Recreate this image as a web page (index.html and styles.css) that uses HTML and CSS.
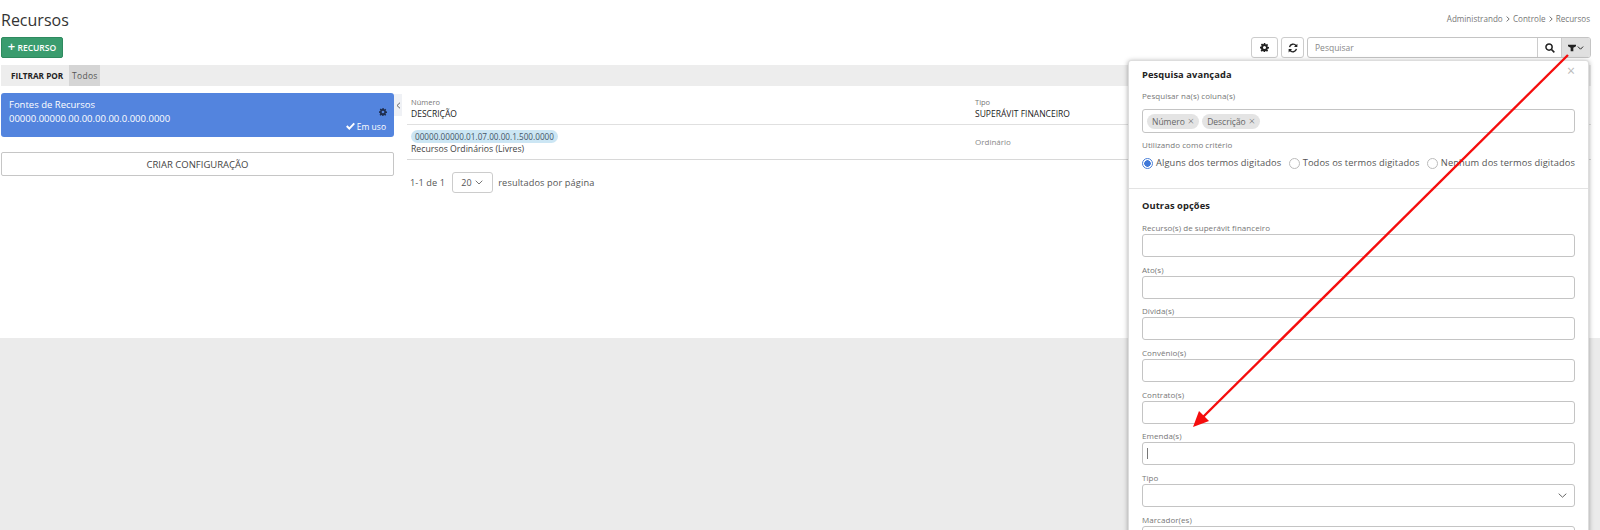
FILE: index.html
```html
<!DOCTYPE html>
<html lang="pt-BR">
<head>
<meta charset="utf-8">
<title>Recursos</title>
<link rel="stylesheet" href="styles.css">
</head>
<body>
<div class="page">
  <header class="top">
    <h1 class="title">Recursos</h1>
    <nav class="crumbs">Administrando <span class="sep"><svg width="4" height="6" viewBox="0 0 4 6" fill="none" stroke="#777" stroke-width="1"><path d="M.6.6 3.2 3 .6 5.4"/></svg></span> Controle <span class="sep"><svg width="4" height="6" viewBox="0 0 4 6" fill="none" stroke="#777" stroke-width="1"><path d="M.6.6 3.2 3 .6 5.4"/></svg></span> Recursos</nav>
  </header>
  <div class="toolbar">
    <button class="btn-add"><span class="plus">+</span> RECURSO</button>
    <div class="tools">
      <button class="tool tool-gear">
        <svg width="9" height="9" viewBox="0 0 16 16"><path fill="#222" fill-rule="evenodd" d="M6.7 0h2.6l.4 2.2 1.4.6L12.5 1.5l1.9 1.9-1.3 1.9.6 1.4 2.3.4v2.7l-2.3.4-.6 1.4 1.3 1.9-1.9 1.9-1.9-1.3-1.4.6-.4 2.3H6.7l-.4-2.3-1.4-.6-1.9 1.3-1.9-1.9 1.3-1.9-.6-1.4L0 9.3V6.7l2.3-.4.6-1.4-1.3-1.9 1.9-1.9 1.9 1.3 1.4-.6zM8 5.3a2.7 2.7 0 1 0 0 5.4 2.7 2.7 0 0 0 0-5.4z"/></svg>
      </button>
      <button class="tool tool-sync">
        <svg width="10" height="10" viewBox="0 0 16 16" fill="none" stroke="#222" stroke-width="2.2"><path d="M2.5 6.5A5.8 5.8 0 0 1 13 4.5"/><path d="M13.5 9.5A5.8 5.8 0 0 1 3 11.5"/><path fill="#222" stroke="none" d="M15 1v5.5H9.5zM1 15V9.5h5.5z"/></svg>
      </button>
      <div class="search">
        <span class="search-input">Pesquisar</span>
        <span class="search-btn">
          <svg width="10" height="10" viewBox="0 0 16 16" fill="none" stroke="#222" stroke-width="2.4"><circle cx="6.5" cy="6.5" r="5"/><path d="M10.2 10.2 15 15"/></svg>
        </span>
        <span class="filter-btn">
          <svg width="8" height="8" viewBox="0 0 12 12"><path fill="#222" d="M0 1h12v2.4L8 5.6V11H4V5.6L0 3.4z"/></svg>
          <svg width="7" height="4" viewBox="0 0 8 5" fill="none" stroke="#222" stroke-width="1.2"><path d="M.7.7 4 4l3.3-3.3"/></svg>
        </span>
      </div>
    </div>
  </div>
  <div class="filterbar"><b class="filter-title">FILTRAR POR</b><span class="filter-tag">Todos</span></div>
  <div class="content">
    <aside class="side">
      <div class="card">
        <div class="card-text">
          <div>Fontes de Recursos</div>
          <div>00000.00000.00.00.00.00.0.000.0000</div>
        </div>
        <div class="card-meta">
          <svg class="card-gear" width="8" height="8" viewBox="0 0 16 16"><path fill="#1f2d4d" fill-rule="evenodd" d="M6.7 0h2.6l.4 2.2 1.4.6L12.5 1.5l1.9 1.9-1.3 1.9.6 1.4 2.3.4v2.7l-2.3.4-.6 1.4 1.3 1.9-1.9 1.9-1.9-1.3-1.4.6-.4 2.3H6.7l-.4-2.3-1.4-.6-1.9 1.3-1.9-1.9 1.3-1.9-.6-1.4L0 9.3V6.7l2.3-.4.6-1.4-1.3-1.9 1.9-1.9 1.9 1.3 1.4-.6zM8 5.3a2.7 2.7 0 1 0 0 5.4 2.7 2.7 0 0 0 0-5.4z"/></svg>
          <span class="in-use"><svg width="9" height="8" viewBox="0 0 12 10" fill="none" stroke="#fff" stroke-width="2.6"><path d="M1 5l3.4 3.4L11 1.4"/></svg> Em uso</span>
        </div>
      </div>
      <button class="btn-create">CRIAR CONFIGURAÇÃO</button>
    </aside>
    <div class="collapse"><svg width="5" height="7" viewBox="0 0 5 7" fill="none" stroke="#666" stroke-width="1"><path d="M4 .7 1 3.5 4 6.3"/></svg></div>
    <main class="main">
      <div class="row head">
        <div class="col-a"><small>Número</small><span>DESCRIÇÃO</span></div>
        <div class="col-b"><small>Tipo</small><span>SUPERÁVIT FINANCEIRO</span></div>
      </div>
      <div class="row body-row">
        <div class="col-a"><span class="pill">00000.00000.01.07.00.00.1.500.0000</span><span class="desc">Recursos Ordinários (Livres)</span></div>
        <div class="col-b type">Ordinário</div>
      </div>
      <div class="pager">
        <span>1-1 de 1</span>
        <span class="select">20 <svg width="8" height="5" viewBox="0 0 8 5" fill="none" stroke="#777" stroke-width="1"><path d="M.7.7 4 4l3.3-3.3"/></svg></span>
        <span>resultados por página</span>
      </div>
    </main>
  </div>
</div>

<section class="panel">
  <div class="panel-top">
    <span class="close">×</span>
    <h2 class="panel-title">Pesquisa avançada</h2>
    <label class="lbl lbl-first">Pesquisar na(s) coluna(s)</label>
    <div class="multi">
      <span class="chip">Número <i>×</i></span>
      <span class="chip">Descrição <i>×</i></span>
    </div>
    <label class="lbl lbl-crit">Utilizando como critério</label>
    <div class="radios">
      <span class="radio"><span class="dot on"></span>Alguns dos termos digitados</span>
      <span class="radio"><span class="dot"></span>Todos os termos digitados</span>
      <span class="radio"><span class="dot"></span>Nenhum dos termos digitados</span>
    </div>
  </div>
  <div class="panel-bottom">
    <h2 class="panel-title">Outras opções</h2>
    <div class="fields">
      <div class="field"><label class="lbl">Recurso(s) de superávit financeiro</label><div class="input"></div></div>
      <div class="field"><label class="lbl">Ato(s)</label><div class="input"></div></div>
      <div class="field"><label class="lbl">Dívida(s)</label><div class="input"></div></div>
      <div class="field"><label class="lbl">Convênio(s)</label><div class="input"></div></div>
      <div class="field"><label class="lbl">Contrato(s)</label><div class="input"></div></div>
      <div class="field"><label class="lbl">Emenda(s)</label><div class="input"><span class="caret"></span></div></div>
      <div class="field"><label class="lbl">Tipo</label><div class="input sel"><svg width="9" height="5" viewBox="0 0 9 5" fill="none" stroke="#666" stroke-width="1"><path d="M.7.7 4.5 4.2 8.3.7"/></svg></div></div>
      <div class="field"><label class="lbl">Marcador(es)</label><div class="input"></div></div>
    </div>
  </div>
</section>

<svg class="arrow" width="1600" height="530" viewBox="0 0 1600 530">
  <path d="M1568 55 1202 418" stroke="#f50d0d" stroke-width="2.4" fill="none"/>
  <path d="M1193 427 1199 411 1209 421z" fill="#f50d0d"/>
</svg>
</body>
</html>
```

FILE: styles.css
```css
* { box-sizing: border-box; }
html, body { margin: 0; padding: 0; height: 530px; overflow: hidden; }
body {
  background: #ebebeb;
  font-family: "Open Sans", "Liberation Sans", sans-serif;
  color: #333;
  position: relative;
}
button { font-family: inherit; cursor: pointer; }

.page { background: #fff; height: 338px; padding: 0 9px 0 1px; overflow: hidden; }

.top { display: flex; justify-content: space-between; height: 37px; }
.title { margin: 11px 0 0; font-size: 16px; line-height: 18px; font-weight: 400; color: #333; }
.crumbs { margin: 13px 1px 0 0; font-size: 8.1px; line-height: 12px; color: #777; }
.sep { display: inline-block; margin: 0 1px; }

.toolbar { display: flex; justify-content: space-between; align-items: flex-start; height: 28px; }
.btn-add {
  flex: none; width: 62px; height: 21px; padding: 0;
  background: #3a9c6e; border: 1px solid #2f8a5f; border-radius: 2px;
  color: #fff; font-size: 8.5px; font-weight: 600; line-height: 18px;
}
.plus { font-size: 13px; line-height: 10px; }
.tools { display: flex; gap: 3px; align-items: flex-start; }
.tool {
  height: 21px; padding: 0; background: #fff;
  border: 1px solid #ccc; border-radius: 3px;
  display: flex; align-items: center; justify-content: center;
}
.tool-gear { width: 27px; }
.tool-sync { width: 23px; }
.search {
  display: flex; width: 284px; height: 21px;
  border: 1px solid #c4c4c4; border-radius: 3px; overflow: hidden;
}
.search-input { flex: 1; font-size: 8.5px; line-height: 19px; padding-left: 7px; color: #888; }
.search-btn { flex: none; width: 24px; display: flex; align-items: center; justify-content: center; border-left: 1px solid #ccc; }
.filter-btn { flex: none; width: 29px; display: flex; align-items: center; justify-content: center; gap: 1px; background: #e0e0e0; border-left: 1px solid #ccc; }

.filterbar { display: flex; height: 21px; background: #ededed; align-items: stretch; }
.filter-title { flex: none; padding-left: 10px; width: 68px; font-size: 8.2px; line-height: 21px; color: #222; font-weight: 700; white-space: nowrap; }
.filter-tag { flex: none; padding: 0 3px; width: 31px; background: #d5d5d5; font-size: 8.5px; line-height: 21px; color: #555; letter-spacing: .3px; }

.content { display: flex; margin-top: 7px; align-items: flex-start; }
.side { flex: none; width: 393px; }
.card {
  height: 44px; background: #5384de; border-radius: 3px; color: #fff;
  display: flex; justify-content: space-between; padding: 5px 8px 0;
  font-size: 9.5px; line-height: 13.5px;
}
.card-meta { display: flex; flex-direction: column; align-items: flex-end; gap: 4px; padding-top: 10px; font-size: 8.5px; line-height: 12px; }
.card-gear { margin-right: -1px; }
.in-use { white-space: nowrap; margin-top: 1px; }
.btn-create {
  display: block; width: 100%; height: 24px; margin-top: 15px; padding: 0;
  background: #fff; border: 1px solid #c6c6c6; border-radius: 2px;
  color: #444; font-size: 9.5px;
}
.collapse {
  flex: none; width: 8px; height: 22px; margin-top: 1px; background: #eff1f5;
  display: flex; align-items: center; justify-content: center;
}
.main { flex: 1; margin-left: 5px; }
.row { display: flex; border-bottom: 1px solid #e0e0e0; padding-left: 4px; }
.head { height: 32px; padding-top: 4px; }
.body-row { height: 35px; border-bottom-color: #d8d8d8; padding-top: 5px; }
.col-a, .col-b { display: flex; flex-direction: column; align-items: flex-start; }
.col-a { width: 564px; }
small { font-size: 7.5px; line-height: 11px; color: #777; }
.head span { font-size: 8.5px; line-height: 12px; color: #222; }
.pill { background: #cce6f4; border-radius: 7px; padding: 0 4px; font-size: 8.2px; line-height: 13px; color: #456; }
.desc { font-size: 8.7px; line-height: 13px; color: #444; }
.type { font-size: 8px; line-height: 24px; color: #888; }
.pager { display: flex; align-items: center; margin-top: 12px; padding-left: 3px; font-size: 9.2px; color: #555; letter-spacing: .12px; }
.select {
  width: 41px; height: 21px; margin: 0 5px 0 7px; border: 1px solid #ccc; border-radius: 3px;
  display: flex; align-items: center; justify-content: space-between; padding: 0 9px 0 8px; font-size: 9px;
}

.panel {
  position: absolute; left: 1128px; top: 60px; width: 461px; height: 560px;
  background: #fff; border: 1px solid #ddd; border-radius: 3px;
  box-shadow: 0 1px 5px rgba(0,0,0,.35);
}
.panel-top { position: relative; height: 128px; padding: 6px 13px 0; border-bottom: 1px solid #e3e3e3; }
.panel-bottom { padding: 9px 13px 0; }
.close { position: absolute; right: 13px; top: 1px; color: #bbb; font-size: 14px; line-height: 18px; }
.panel-title { margin: 0; font-size: 9.3px; line-height: 16px; font-weight: 700; color: #222; letter-spacing: .1px; }
.lbl { display: block; font-size: 8px; line-height: 12px; color: #777; white-space: nowrap; letter-spacing: .05px; }
.lbl-first { margin-top: 7px; }
.multi {
  display: flex; gap: 3px; align-items: center; height: 24px; margin-top: 7px; padding: 0 4px;
  border: 1px solid #c4c4c4; border-radius: 3px;
}
.chip { display: flex; align-items: center; gap: 3px; background: #e4e4e4; border-radius: 8px; padding: 0 5px; font-size: 8.5px; line-height: 15px; color: #666; }
.chip i { font-style: normal; font-size: 11px; font-weight: 300; line-height: 12px; }
.lbl-crit { margin-top: 6px; }
.radios { display: flex; justify-content: space-between; margin-top: 5px; }
.radio { display: flex; align-items: center; gap: 3px; font-size: 9.3px; line-height: 14px; color: #555; white-space: nowrap; letter-spacing: .1px; }
.dot { width: 11px; height: 11px; border: 1px solid #bbb; border-radius: 50%; background: #fff; display: inline-block; }
.dot.on { border-color: #4a7fd8; background: radial-gradient(circle, #3f78d8 0 3px, #fff 3.5px); }

.fields { display: flex; flex-direction: column; margin-top: 8px; }
.field { height: 41.7px; flex: none; }
.input {
  height: 23px; border: 1px solid #c4c4c4; border-radius: 3px; background: #fff;
  display: flex; align-items: center; padding-left: 4px;
}
.sel { justify-content: flex-end; padding-right: 7px; }
.caret { width: 1px; height: 11px; background: #777; }

.arrow { position: absolute; left: 0; top: 0; pointer-events: none; }
```
